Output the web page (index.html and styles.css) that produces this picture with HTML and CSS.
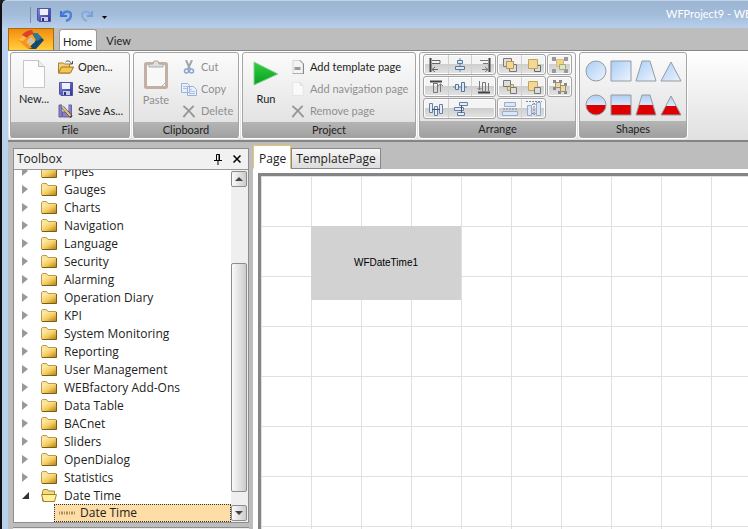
FILE: index.html
```html
<!DOCTYPE html>
<html lang="en">
<head>
<meta charset="utf-8">
<title>WFProject9</title>
<link rel="stylesheet" href="styles.css">
</head>
<body>
<svg class="defs" aria-hidden="true">
  <defs>
    <linearGradient id="gold" x1="0" y1="0" x2="1" y2="1"><stop offset="0" stop-color="#fff3b4"/><stop offset=".5" stop-color="#f5cc60"/><stop offset="1" stop-color="#b07c10"/></linearGradient>
    <linearGradient id="sky" x1="0" y1="0" x2="1" y2="1"><stop offset="0" stop-color="#a9cdf6"/><stop offset="1" stop-color="#edf4fd"/></linearGradient>
    <linearGradient id="half" x1="0" y1="0" x2="0" y2="1"><stop offset="0" stop-color="#aecdf4"/><stop offset=".52" stop-color="#dbe9fb"/><stop offset=".52" stop-color="#de0000"/><stop offset="1" stop-color="#de0000"/></linearGradient>
    <linearGradient id="green" x1="0" y1="0" x2="0" y2="1"><stop offset="0" stop-color="#2fd03c"/><stop offset="1" stop-color="#0a9f22"/></linearGradient>
    <linearGradient id="ink" x1="0" y1="0" x2="1" y2="1"><stop offset="0" stop-color="#8790e0"/><stop offset="1" stop-color="#2c2c92"/></linearGradient>
    <symbol id="folder" viewBox="0 0 16 13"><path d="M.5 12V1.500l1-1h4l1.500 2h8v9.500z" fill="#f7e49a" stroke="#b99a50"/><path d="M1 3.500h14.500v9H1z" fill="url(#gold)"/><path d="M15.500 3v9.500H1" fill="none" stroke="#7d5c14"/></symbol>
    <symbol id="folder-open" viewBox="0 0 16 13"><path d="M1.500 12V2.500l1-2h4l1 1.500h6v10z" fill="#f3dc7c" stroke="#a58a35"/><path d="M.500 5.500h15l-2 7h-11z" fill="#fff0a0" stroke="#a58325"/></symbol>
    <symbol id="disk" viewBox="0 0 14 14"><path d="M.500.500h13v13H2l-1.500-1.500z" fill="url(#ink)" stroke="#5050a8"/><path d="M3 1h8v6H3z" fill="#eef0ff"/><path d="M4 9h7v4H4z" fill="#c8cbe8"/><path d="M5 10h2v3H5z" fill="#303070"/></symbol>
    <symbol id="sheet" viewBox="0 0 22 28"><path d="M.500.500h15l6 6v21H.500z" fill="#fdfdfd" stroke="#c6c6c6"/><path d="M15.500.500v6h6" fill="#eee" stroke="#bbb"/></symbol>
    <symbol id="cross" viewBox="0 0 14 14"><path d="M1 1c4 3 8 7 12 12M12 1C8 5 4 9 1 13" fill="none" stroke="#838383" stroke-width="2"/></symbol>
  </defs>
</svg>

<header class="titlebar">
  <div class="quick">
    <button aria-label="Save"><svg width="14" height="14"><use href="#disk"/></svg></button>
    <button aria-label="Undo"><svg width="12" height="13" viewBox="0 0 12 13"><path d="M1 2v5h6" fill="none" stroke="#3f74cc" stroke-width="2"/><path d="M2 6c3-5 9-4 9 0 0 3-2 5-5 6" fill="none" stroke="#4f82d8" stroke-width="2.500"/></svg></button>
    <button aria-label="Redo"><svg width="12" height="13" viewBox="0 0 12 13"><path d="M11 2v5H6" fill="none" stroke="#7a9ed6" stroke-width="2"/><path d="M10 6C7 1 1 2 1 6c0 3 2 5 5 6" fill="none" stroke="#87a9dc" stroke-width="2"/></svg></button>
    <button aria-label="Customize" class="more"><svg width="5" height="3" viewBox="0 0 5 3"><path d="M0 0h5L2.500 3z"/></svg></button>
  </div>
  <div class="title">WFProject9 - WE</div>
</header>

<div class="frame">
  <nav class="menu">
    <button class="app" aria-label="Application menu"><svg width="28" height="20" viewBox="0 0 28 20"><path d="M15 3h5l7 7-8 9h-8l8-9z" fill="#14496b"/><path d="M15 3h5l5 5-5 3z" fill="#2a7a9c"/><path d="M9 4l4 3-4 5 6 6-4 1L1 10z" fill="#f7931e"/><path d="M1 10l8-6 2 2-5 5z" fill="#ffc14a"/><path d="M5 5c2-3 6-5 10-5l2 4c-3 0-5 1-7 4z" fill="#e0402a"/><path d="M14 7l4 5-4 3-4-4z" fill="#c9c2b4"/></svg></button>
    <button class="tab on">Home</button>
    <button class="tab">View</button>
  </nav>

  <div class="ribbon">
    <section class="group">
      <div class="tools file">
        <button class="big"><svg width="22" height="28"><use href="#sheet"/></svg><span>New...</span></button>
        <div class="list">
          <button><svg width="17" height="14" viewBox="0 0 17 14"><path d="M1 13V3h5l1 1h5v9z" fill="#f1d27a" stroke="#a8802a"/><path d="M1 13l3-6h12l-3 6z" fill="#f7c650" stroke="#a07420"/><path d="M8 2c2-2 5-1 6 2M12 4h3V1" fill="none" stroke="#4c5560"/></svg>Open...</button>
          <button><svg width="14" height="14"><use href="#disk"/></svg>Save</button>
          <button><svg width="15" height="14" viewBox="0 0 15 14"><path d="M.500 1h3v12h-3zM10 1h3v12h-3zM4 8h6v5H4z" fill="#8a80c4" stroke="#6860a4"/><path d="M4 1h6v6H4z" fill="#e6e6f4"/><path d="M4 3l9 10" stroke="#3d3a30" stroke-width="3"/><path d="M4 3l8 9" stroke="#e8c878" stroke-width="2"/></svg>Save As...</button>
        </div>
      </div>
      <h2>File</h2>
    </section>
    <section class="group">
      <div class="tools clip">
        <button class="big off"><svg width="24" height="29" viewBox="0 0 24 29"><rect x="1.500" y="3.500" width="21" height="24" rx="1" fill="#fafafa" stroke="#b8a092" stroke-width="3"/><path d="M5 7V4h4l1-3h4l1 3h4v3z" fill="#d8d8d8" stroke="#999"/><path d="M18 26l3-3" stroke="#aaa"/></svg><span>Paste</span></button>
        <div class="list off">
          <button><svg width="10" height="14" viewBox="0 0 10 14"><path d="M2 0l4 9M8 0L4 9" stroke="#8a939f" stroke-width="2"/><circle cx="2.500" cy="11" r="2" fill="none" stroke="#6f91cf" stroke-width="1.500"/><circle cx="7.500" cy="11" r="2" fill="none" stroke="#6f91cf" stroke-width="1.500"/></svg>Cut</button>
          <button><svg width="16" height="13" viewBox="0 0 16 13"><path d="M.500.500h6l2 2v7h-8zM6.500 3.500h6l3 3v6h-9z" fill="#eaf1fd" stroke="#86a2d4"/><path d="M2 3.500h4M2 5.500h4M8 6.500h3M8 8.500h6M8 10.500h6" stroke="#9db6e0"/></svg>Copy</button>
          <button><svg width="13" height="13"><use href="#cross"/></svg>Delete</button>
        </div>
      </div>
      <h2>Clipboard</h2>
    </section>
    <section class="group">
      <div class="tools project">
        <button class="big"><svg width="26" height="28" viewBox="0 0 26 28"><path d="M1 2l24 12L1 25z" fill="url(#green)" stroke="#8fcf98"/></svg><span>Run</span></button>
        <div class="list">
          <button><svg width="11" height="14" viewBox="0 0 11 14"><path d="M.500.500h7l3 3v10H.500z" fill="#f4f4f4" stroke="#d4d4d4"/><path d="M7 0l4 4v10H0" fill="none" stroke="#888"/><path d="M2 7h6v3H2z" fill="#999"/></svg>Add template page</button>
          <button class="off"><svg width="11" height="14" viewBox="0 0 22 28"><use href="#sheet"/></svg>Add navigation page</button>
          <button class="off"><svg width="13" height="13"><use href="#cross"/></svg>Remove page</button>
        </div>
      </div>
      <h2>Project</h2>
    </section>
    <section class="group">
      <div class="tools arrange">
        <div class="set three">
          <button aria-label="Align left"><svg class="ic" viewBox="0 0 14 14"><path d="M1.500 0v14" stroke="#444" stroke-width="2"/><path d="M3 2.500h8v3H3M3 11.500h6M6 9l-3 2.500L6 14" stroke="#666"/></svg></button>
          <button aria-label="Align center"><svg class="ic" viewBox="0 0 14 14"><path d="M7 0v14" stroke="#789"/><path d="M4.500 2.500h5v3h-5zM2.500 8.500h9v3h-9z" fill="#dbe9fa" stroke="#55779f"/></svg></button>
          <button aria-label="Align right"><svg class="ic" viewBox="0 0 14 14"><path d="M12.500 0v14" stroke="#444" stroke-width="2"/><path d="M11 2.500H3M11 5.500H6M11 11.500H5M8 9l3 2.500L8 14" stroke="#777"/></svg></button>
        </div>
        <div class="set two">
          <button aria-label="Bring forward"><svg class="ic" viewBox="0 0 14 14"><path d="M.500.500h8v8h-8zM6.500 6.500h7v7h-7z" fill="#ddd" stroke="#777"/><path d="M3.500 3.500h7v7h-7z" fill="#f5d890" stroke="#b59655"/></svg></button>
          <button aria-label="Bring to front"><svg class="ic" viewBox="0 0 14 14"><path d="M7.500 7.500h6v6h-6z" fill="#ddd" stroke="#666"/><path d="M1.500 1.500h9v9h-9z" fill="#f5d890" stroke="#bea467"/></svg></button>
        </div>
        <div class="set one">
          <button aria-label="Group"><svg class="ic wide" viewBox="0 0 16 16"><path d="M0 0h4v4H0zM12 0h4v4h-4zM0 12h4v4H0zM12 12h4v4h-4z" fill="#999"/><path d="M4.500 2.500h7v7h-7z" fill="#f2d586" stroke="#d4bd84"/><path d="M7.500 7.500h6v5h-6z" fill="#dce8b8" stroke="#a8a880"/></svg></button>
        </div>
        <div class="set three">
          <button aria-label="Align top"><svg class="ic" viewBox="0 0 14 14"><path d="M1 1.500h12" stroke="#444" stroke-width="2"/><path d="M4.500 3v6M4.500 3.500h4v9h-4zM11.500 12V4M9 6l2.500-2L14 6" stroke="#777"/></svg></button>
          <button aria-label="Align middle"><svg class="ic" viewBox="0 0 14 14"><path d="M0 7h14" stroke="#789"/><path d="M2.500 4.500h3v5h-3zM8.500 2.500h3v9h-3z" fill="#dbe9fa" stroke="#55779f"/></svg></button>
          <button aria-label="Align bottom"><svg class="ic" viewBox="0 0 14 14"><path d="M1 12.500h12" stroke="#444" stroke-width="2"/><path d="M5.500 2.500h3v9h-3zM2.500 1v9M.500 8l2 2 2-2M11.500 3v8" stroke="#777"/></svg></button>
        </div>
        <div class="set two">
          <button aria-label="Send backward"><svg class="ic" viewBox="0 0 14 14"><path d="M4.500 4.500h6v6h-6z" fill="#f5d890" stroke="#b59655"/><path d="M.500.500h7v6h-7zM7.500 7.500h6v6h-6z" fill="#ddd" stroke="#777"/></svg></button>
          <button aria-label="Send to back"><svg class="ic" viewBox="0 0 14 14"><path d="M1.500 1.500h9v9h-9z" fill="#f5d890" stroke="#bea467"/><path d="M7.500 7.500h6v6h-6z" fill="#ddd" stroke="#777"/></svg></button>
        </div>
        <div class="set one">
          <button aria-label="Ungroup"><svg class="ic wide" viewBox="0 0 16 16"><path d="M1 1h3v3H1zM7 1h3v3H7zM1 8h3v3H1zM12 4h3v3h-3zM6 12h3v3H6zM12 12h3v3h-3z" fill="#888"/><path d="M3.500 3.500h5v5h-5zM8.500 6.500h5v6h-5z" fill="#ead8a8" stroke="#a09068"/></svg></button>
        </div>
        <div class="set three">
          <button aria-label="Space across"><svg class="ic" viewBox="0 0 14 14"><path d="M.500 1.500h3v9h-3zM5.500 4.500h3v9h-3zM10.500 2.500h3v9h-3z" fill="#e6edf8" stroke="#6580a8"/><path d="M3 7.500h8" stroke="#456"/></svg></button>
          <button aria-label="Space down"><svg class="ic" viewBox="0 0 14 14"><path d="M5.500.500h8v3h-8zM.500 5.500h9v3h-9zM3.500 10.500h7v3h-7z" fill="#e6edf8" stroke="#6580a8"/><path d="M7.500 3v8" stroke="#456"/></svg></button>
        </div>
        <div class="set two">
          <button aria-label="Same width"><svg class="ic wide" viewBox="0 0 16 16"><path d="M2.500 1.500h11v4h-11zM.500 10.500h15v4H.500z" fill="#dbe7f8" stroke="#9aaccc"/><path d="M1 8h14" stroke="#789" stroke-dasharray="2 1"/></svg></button>
          <button aria-label="Same height"><svg class="ic wide" viewBox="0 0 16 16"><path d="M1.500 4.500h4v10h-4zM10.500 1.500h4v13h-4z" fill="#dbe7f8" stroke="#9aaccc"/><path d="M8 2v12M6 4l2-2 2 2M6 12l2 2 2-2M0 .500h16" stroke="#789" stroke-dasharray="2 1"/></svg></button>
        </div>
      </div>
      <h2>Arrange</h2>
    </section>
    <section class="group">
      <div class="tools shapes">
        <button aria-label="Circle"><svg class="sh" viewBox="0 0 22 22"><circle cx="11" cy="11" r="10" fill="url(#sky)"/></svg></button>
        <button aria-label="Square"><svg class="sh" viewBox="0 0 22 22"><path d="M1 1h20v20H1z" fill="url(#sky)"/></svg></button>
        <button aria-label="Trapezoid"><svg class="sh" viewBox="0 0 22 22"><path d="M7 1h8l6 20H1z" fill="url(#sky)"/></svg></button>
        <button aria-label="Triangle"><svg class="sh" viewBox="0 0 22 22"><path d="M11 2l10 19H1z" fill="url(#sky)"/></svg></button>
        <button aria-label="Filled circle"><svg class="sh" viewBox="0 0 22 22"><circle cx="11" cy="11" r="10" fill="url(#half)"/></svg></button>
        <button aria-label="Filled square"><svg class="sh" viewBox="0 0 22 22"><path d="M1 1h20v20H1z" fill="url(#half)"/></svg></button>
        <button aria-label="Filled trapezoid"><svg class="sh" viewBox="0 0 22 22"><path d="M7 1h8l6 20H1z" fill="url(#half)"/></svg></button>
        <button aria-label="Filled triangle"><svg class="sh" viewBox="0 0 22 22"><path d="M11 2l10 19H1z" fill="url(#half)"/></svg></button>
      </div>
      <h2>Shapes</h2>
    </section>
  </div>

  <main class="work">
    <aside class="side">
      <section class="toolbox">
        <div class="head">
          <span>Toolbox</span>
          <button aria-label="Pin"><svg width="8" height="11" viewBox="0 0 8 11"><path d="M2.500 6V.500h3V6M5 0v6M0 6.500h8M4 7v4" fill="none" stroke="#000"/></svg></button>
          <button aria-label="Close"><svg width="8" height="8" viewBox="0 0 8 8"><path d="M.500.500l7 7M7.500.500l-7 7" stroke="#000" stroke-width="1.500"/></svg></button>
        </div>
        <div class="body">
          <div class="tree">
            <button class="node">Pipes</button>
            <button class="node">Gauges</button>
            <button class="node">Charts</button>
            <button class="node">Navigation</button>
            <button class="node">Language</button>
            <button class="node">Security</button>
            <button class="node">Alarming</button>
            <button class="node">Operation Diary</button>
            <button class="node">KPI</button>
            <button class="node">System Monitoring</button>
            <button class="node">Reporting</button>
            <button class="node">User Management</button>
            <button class="node">WEBfactory Add-Ons</button>
            <button class="node">Data Table</button>
            <button class="node">BACnet</button>
            <button class="node">Sliders</button>
            <button class="node">OpenDialog</button>
            <button class="node">Statistics</button>
            <button class="node open">Date Time</button>
            <button class="leaf"><svg width="16" height="4" viewBox="0 0 16 4"><path d="M0 2h16" stroke="#b08d58" stroke-width="3" stroke-dasharray="1 1 2 1"/></svg>Date Time</button>
          </div>
          <div class="scroll">
            <button aria-label="Scroll up"><svg width="8" height="4" viewBox="0 0 8 4"><path d="M0 4l4-4 4 4z" fill="#444"/></svg></button>
            <div class="track"><div class="thumb"></div></div>
            <button aria-label="Scroll down"><svg width="8" height="4" viewBox="0 0 8 4"><path d="M0 0l4 4 4-4z" fill="#444"/></svg></button>
          </div>
        </div>
      </section>
      <div class="next"></div>
    </aside>
    <section class="editor">
      <div class="pages"><button class="on">Page</button><button>TemplatePage</button></div>
      <div class="sheet"><div class="canvas"><div class="widget">WFDateTime1</div></div></div>
    </section>
  </main>
</div>
<script src="tree.js"></script>
</body>
</html>
```
FILE: tree.js
```js
// Put the expander arrow and the folder icon in front of each category.
document.querySelectorAll('.node').forEach(function (node) {
  var open = node.classList.contains('open');
  var arrow = open ? 'M7 1v7H0z' : 'M0 0l6 4-6 5z';
  node.insertAdjacentHTML('afterbegin',
    '<svg class="arrow" viewBox="0 0 8 9"><path d="' + arrow + '"/></svg>' +
    '<svg class="folder" viewBox="0 0 16 13"><use href="#' + (open ? 'folder-open' : 'folder') + '"/></svg>');
});
```
FILE: styles.css
```css
* { box-sizing: border-box; }
body {
  margin: 0;
  height: 100vh;
  overflow: hidden;
  display: flex;
  flex-direction: column;
  font: 12px/16px "Open Sans", "Noto Sans", sans-serif;
  color: #222;
  background: #bad0ec;
  border-left: 2px solid #111;
  border-top-left-radius: 6px;
}
html { background: #222; }
button {
  font: inherit;
  color: inherit;
  background: none;
  border: 0;
  padding: 0;
  display: flex;
  align-items: center;
  white-space: nowrap;
}
svg { display: block; flex: none; }
.defs { position: absolute; width: 0; height: 0; }

.titlebar {
  height: 28px;
  flex: none;
  display: flex;
  justify-content: space-between;
  background: linear-gradient(#9ab4d2, #a2bcda 50%, #b8d0ec);
  border-top: 1px solid #c3d4e8;
  border-top-left-radius: 6px;
  overflow: hidden;
}
.quick {
  display: flex;
  align-items: center;
  gap: 9px;
  margin: 6px 0 5px 28px;
  padding-left: 6px;
  border-left: 1px solid #7c8da3;
}
.more { padding-top: 5px; }
.title, .menu, .ribbon { font: 11px/16px Lato, sans-serif; }
.title { color: #fff; width: 82px; padding-top: 5px; white-space: nowrap; }

.frame {
  flex: 1;
  min-height: 0;
  margin-left: 6px;
  display: flex;
  flex-direction: column;
  background: #bdbdbd;
}
.menu { height: 22px; flex: none; display: flex; align-items: flex-end; }
.app {
  width: 46px;
  height: 22px;
  justify-content: center;
  background: linear-gradient(#f08c10, #ffb428 60%, #ffd040);
  border: 1px solid #a86a10;
  border-bottom: 0;
}
.tab { height: 21px; padding: 3px 8px 0 9px; }
.tab.on {
  margin-left: 5px;
  padding: 3px 4px 0 3px;
  background: #fff;
  border: 1px solid #999;
  border-bottom: 0;
  border-radius: 3px 3px 0 0;
}

.ribbon {
  height: 92px;
  flex: none;
  display: flex;
  gap: 3px;
  padding: 1px 2px 2px;
  background: linear-gradient(#fff, #e0e0e0);
  border-top: 1px solid #888;
  border-bottom: 2px solid #858585;
}
.group {
  display: flex;
  flex-direction: column;
  border: 1px solid #a5a5a5;
  border-radius: 3px;
  background: linear-gradient(#fbfbfb, #dedede);
  box-shadow: 0 0 0 1px #fff;
}
.group h2 {
  margin: 0;
  height: 16px;
  font-size: 11px;
  line-height: 16px;
  font-weight: 400;
  text-align: center;
  background: linear-gradient(#b5b5b5, #a0a0a0);
}
.tools { flex: 1; display: flex; }
.big { flex-direction: column; gap: 3px; padding-top: 7px; }
.list { display: flex; flex-direction: column; padding-top: 3px; }
.list button { height: 22px; gap: 3px; }
.off { color: #8f8f8f; }
.off svg { opacity: .8; }
.list svg { width: 18px; }
.file { width: 118px; padding-left: 8px; }
.file .big { width: 30px; }
.file .list { padding-left: 8px; }
.clip { width: 104px; padding-left: 8px; }
.clip .big { width: 28px; }
.clip .list { padding-left: 10px; }
.project { width: 172px; padding-left: 10px; }
.project .list { padding-left: 10px; }

.arrange {
  width: 155px;
  padding: 1px 3px;
  display: grid;
  grid-template-columns: 73px 49px 25px;
  grid-template-rows: repeat(3, 21px);
  gap: 1px;
}
.set {
  display: flex;
  border: 1px solid #a3a3a3;
  border-radius: 3px;
  background: linear-gradient(#f4f4f4 45%, #cfcfcf 50%, #e4e4e4);
  box-shadow: inset 0 0 0 1px #fff;
}
.set button { width: 24px; justify-content: center; }
.set button + button { border-left: 1px solid #d0d0d0; }
.ic { width: 14px; height: 14px; fill: none; }
.ic.wide { width: 16px; height: 16px; }
.shapes {
  width: 106px;
  padding: 7px 5px 0;
  display: grid;
  grid-template-columns: repeat(4, 22px);
  grid-auto-rows: 22px;
  column-gap: 3px;
  row-gap: 12px;
}
.sh { width: 22px; height: 22px; stroke: #969ba2; }

.work { flex: 1; min-height: 0; display: flex; gap: 4px; }
.side {
  width: 241px;
  flex: none;
  display: flex;
  flex-direction: column;
  gap: 4px;
  padding: 6px 0 0 5px;
}
.toolbox {
  flex: 1;
  min-height: 0;
  display: flex;
  flex-direction: column;
  background: #fff;
  border: 1px solid #8e8e8e;
}
.head {
  height: 21px;
  flex: none;
  display: flex;
  align-items: center;
  gap: 11px;
  padding: 0 7px 0 3px;
  background: #f1f1f1;
  border-bottom: 1px solid #999;
}
.head span { flex: 1; }
.body { flex: 1; min-height: 0; display: flex; }
.tree {
  flex: 1;
  display: flex;
  flex-direction: column;
  justify-content: flex-end;
  overflow: hidden;
}
.node, .leaf { height: 18px; flex: none; line-height: 18px; }
.node { padding-left: 8px; padding-top: 1px; }
.arrow { width: 8px; height: 9px; fill: #999; }
.open .arrow { fill: #333; }
.folder { width: 16px; height: 13px; margin: 0 7px 0 11px; }
.leaf {
  margin-left: 40px;
  padding-left: 4px;
  gap: 5px;
  background: #ffdda6;
  border: 1px dotted #333;
}
.scroll {
  width: 17px;
  display: flex;
  flex-direction: column;
  padding: 1px 0;
  background: #efefef;
}
.scroll button, .thumb {
  border: 1px solid #8c8c8c;
  border-radius: 2px;
  background: linear-gradient(90deg, #fafafa, #ccc);
}
.scroll button { width: 16px; height: 16px; justify-content: center; }
.track { flex: 1; display: flex; flex-direction: column; justify-content: flex-end; padding-bottom: 13px; }
.thumb { width: 16px; height: 75%; }
.next { height: 2px; background: #eee; border-top: 1px solid #8e8e8e; }

.editor { flex: 1; min-width: 0; display: flex; flex-direction: column; padding-top: 3px; }
.pages { display: flex; align-items: flex-end; }
.pages button {
  height: 21px;
  padding: 0 4px;
  background: linear-gradient(#f6f6f6, #dcdcdc);
  border: 1px solid #888;
}
.pages .on {
  height: 24px;
  padding: 3px 4px 0 5px;
  background: #fff;
  border-color: #e4c568;
  border-bottom-color: #fff;
}
.sheet { flex: 1; display: flex; padding: 4px 0 0 5px; background: #fff; }
.canvas {
  flex: 1;
  padding: 50px;
  border: 3px solid #858585;
  border-width: 3px 0 0 3px;
  background:
    linear-gradient(90deg, transparent 49px, #e0e0e0 49px) 1px 1px / 50px 50px,
    linear-gradient(transparent 49px, #e0e0e0 49px) 1px 1px / 50px 50px,
    #fff;
  background-clip: padding-box;
}
.widget {
  width: 150px;
  height: 74px;
  display: flex;
  align-items: center;
  justify-content: center;
  background: #d2d2d2;
  color: #000;
  font: 10px/14px "Liberation Sans", Arial, sans-serif;
}
```
